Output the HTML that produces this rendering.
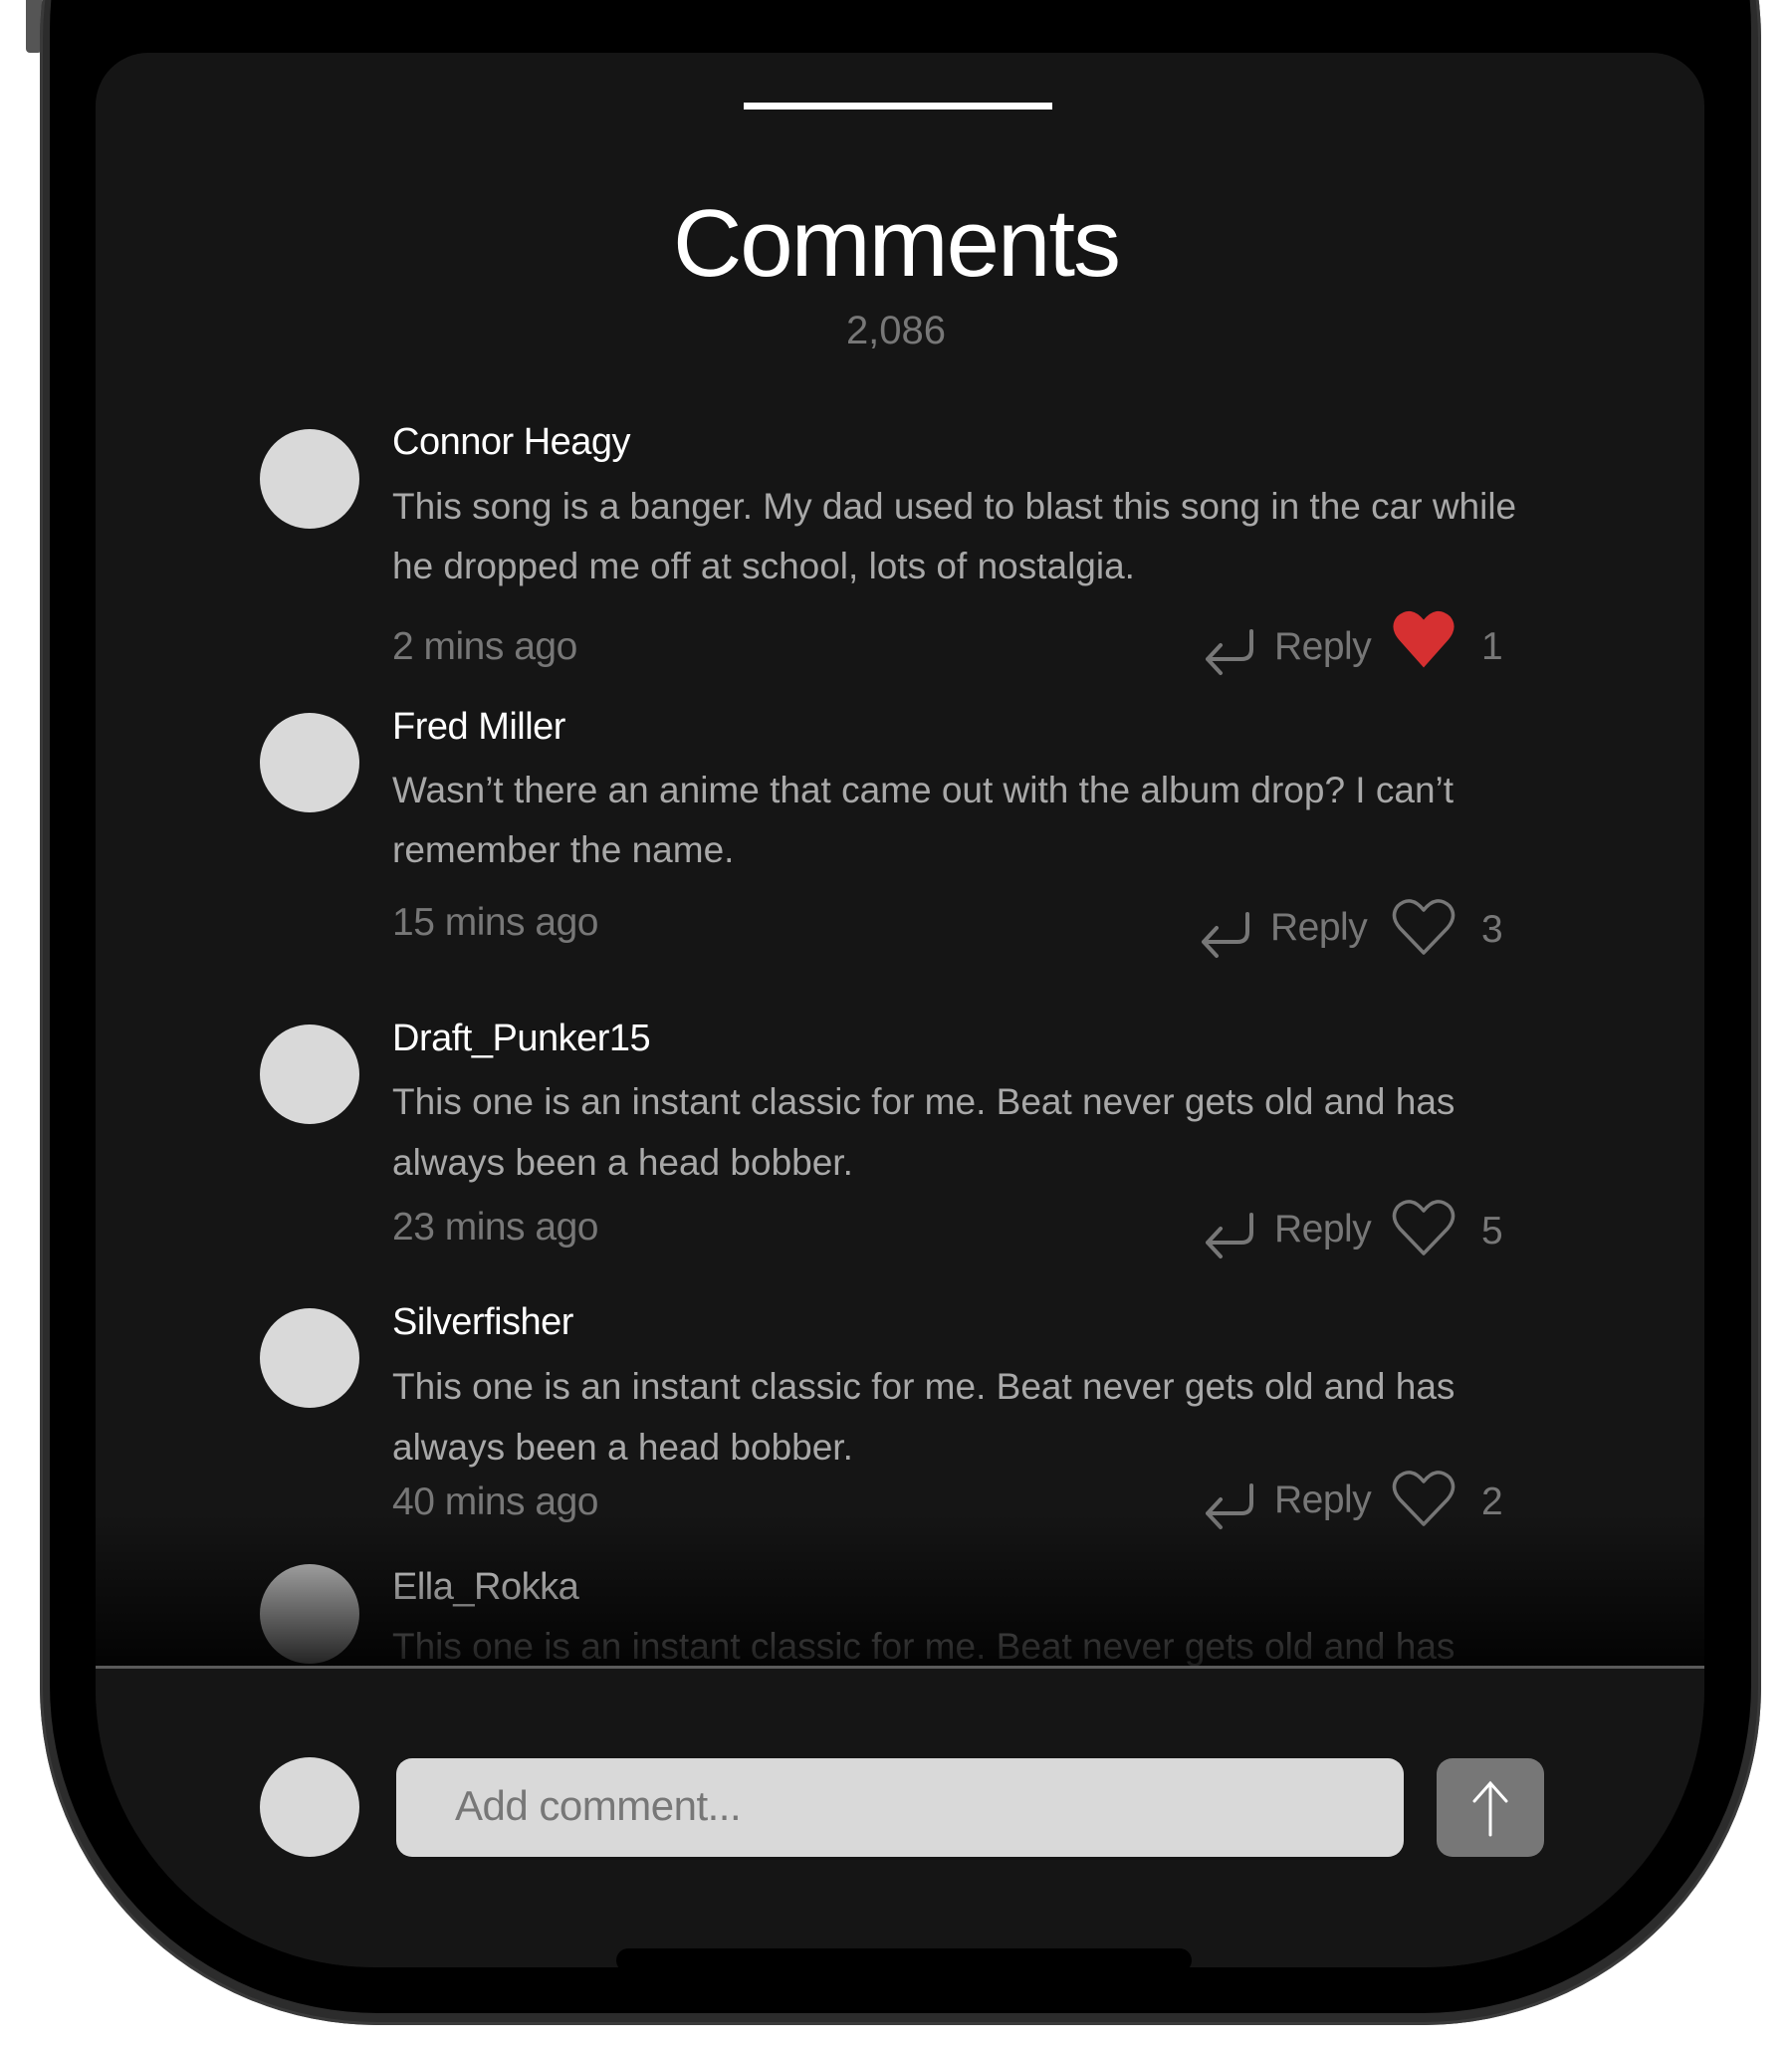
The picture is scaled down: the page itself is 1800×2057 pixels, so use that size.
<!DOCTYPE html>
<html><head><meta charset="utf-8"><style>
*{margin:0;padding:0;box-sizing:border-box}
body{width:1800px;height:2057px;background:#fff;position:relative;overflow:hidden;font-family:"Liberation Sans",sans-serif}
.a{position:absolute}
.frame{left:40px;top:-300px;width:1729px;height:2334px;border-radius:340px;background:#2c2c2c;box-shadow:inset 0 0 0 3px #3a3a3a}
.inner{left:50px;top:-300px;width:1709px;height:2322px;border-radius:330px;background:#000}
.sheet{left:96px;top:53px;width:1616px;height:1923px;border-radius:53px 53px 280px 280px;background:#151515;overflow:hidden}
.av{width:100px;height:100px;border-radius:50%;background:#d9d9d9;left:261px}
.name{left:394px;color:#fff;font-size:38px;letter-spacing:-0.5px;white-space:nowrap}
.body{left:394px;color:#a8a8a8;font-size:37px;letter-spacing:0px;white-space:nowrap}
.meta{color:#777;font-size:39px;letter-spacing:-0.5px;white-space:nowrap}
</style></head><body>
<div class="a" style="left:26px;top:0;width:16px;height:53px;background:#555;border-radius:0 0 4px 4px"></div>
<div class="a frame"></div>
<div class="a inner"></div>
<div class="a sheet"></div>
<div class="a" style="left:747px;top:103px;width:310px;height:7px;background:#fff"></div>
<div class="a" style="left:0;width:1800px;top:190px;text-align:center;color:#fff;font-size:96px;letter-spacing:-2px">Comments</div>
<div class="a" style="left:0;width:1800px;top:310px;text-align:center;color:#777;font-size:40px">2,086</div>

<div class="a av" style="top:431px"></div>
<div class="a name" style="top:423px">Connor Heagy</div>
<div class="a body" style="top:488px">This song is a banger. My dad used to blast this song in the car while</div>
<div class="a body" style="top:548px">he dropped me off at school, lots of nostalgia.</div>
<div class="a meta" style="left:394px;top:628px">2 mins ago</div>

<div class="a av" style="top:716px"></div>
<div class="a name" style="top:709px">Fred Miller</div>
<div class="a body" style="top:773px">Wasn’t there an anime that came out with the album drop? I can’t</div>
<div class="a body" style="top:833px">remember the name.</div>
<div class="a meta" style="left:394px;top:905px">15 mins ago</div>

<div class="a av" style="top:1029px"></div>
<div class="a name" style="top:1022px">Draft_Punker15</div>
<div class="a body" style="top:1086px">This one is an instant classic for me. Beat never gets old and has</div>
<div class="a body" style="top:1147px">always been a head bobber.</div>
<div class="a meta" style="left:394px;top:1211px">23 mins ago</div>

<div class="a av" style="top:1314px"></div>
<div class="a name" style="top:1307px">Silverfisher</div>
<div class="a body" style="top:1372px">This one is an instant classic for me. Beat never gets old and has</div>
<div class="a body" style="top:1433px">always been a head bobber.</div>
<div class="a meta" style="left:394px;top:1487px">40 mins ago</div>

<div class="a av" style="top:1571px"></div>
<div class="a name" style="top:1573px">Ella_Rokka</div>
<div class="a body" style="top:1633px">This one is an instant classic for me. Beat never gets old and has</div>

<svg class="a" style="left:0;top:0" width="1800" height="1700">
<g fill="none" stroke="#777" stroke-width="4" stroke-linecap="round" stroke-linejoin="round">
<g><path d="M1257 634v18q0 10-10 10h-34M1226 648l-13 14 13 14"/></g>
<g transform="translate(-4,284)"><path d="M1257 634v18q0 10-10 10h-34M1226 648l-13 14 13 14"/></g>
<g transform="translate(0,586)"><path d="M1257 634v18q0 10-10 10h-34M1226 648l-13 14 13 14"/></g>
<g transform="translate(0,858)"><path d="M1257 634v18q0 10-10 10h-34M1226 648l-13 14 13 14"/></g>
<g stroke-width="3.5">
<path transform="translate(0,290)" d="M1430 667L1406 642Q1396 630 1404 620Q1417 608 1430 624Q1443 608 1456 620Q1464 630 1454 642Z"/>
<path transform="translate(0,592)" d="M1430 667L1406 642Q1396 630 1404 620Q1417 608 1430 624Q1443 608 1456 620Q1464 630 1454 642Z"/>
<path transform="translate(0,864)" d="M1430 667L1406 642Q1396 630 1404 620Q1417 608 1430 624Q1443 608 1456 620Q1464 630 1454 642Z"/>
</g></g>
<path d="M1430 669L1406 642Q1396 630 1404 620Q1417 608 1430 624Q1443 608 1456 620Q1464 630 1454 642Z" fill="#d63031" stroke="#d63031" stroke-width="2"/>
</svg>
<div class="a meta" style="left:1280px;top:628px">Reply</div>
<div class="a meta" style="left:1488px;top:628px">1</div>
<div class="a meta" style="left:1276px;top:910px">Reply</div>
<div class="a meta" style="left:1488px;top:912px">3</div>
<div class="a meta" style="left:1280px;top:1213px">Reply</div>
<div class="a meta" style="left:1488px;top:1215px">5</div>
<div class="a meta" style="left:1280px;top:1485px">Reply</div>
<div class="a meta" style="left:1488px;top:1487px">2</div>

<div class="a" style="left:96px;top:1520px;width:1616px;height:155px;background:linear-gradient(rgba(0,0,0,0),rgba(0,0,0,0.85))"></div>
<div class="a" style="left:96px;top:1673px;width:1616px;height:3px;background:#5a5a5a"></div>
<div class="a" style="left:96px;top:1676px;width:1616px;height:300px;background:#151515;border-radius:0 0 280px 280px"></div>

<div class="a av" style="top:1765px"></div>
<div class="a" style="left:398px;top:1766px;width:1012px;height:99px;border-radius:16px;background:#d9d9d9"></div>
<div class="a" style="left:457px;top:1790px;color:#777;font-size:42px;letter-spacing:-0.5px">Add comment...</div>
<div class="a" style="left:1443px;top:1766px;width:108px;height:99px;border-radius:16px;background:#777"></div>
<svg class="a" style="left:1443px;top:1766px" width="108" height="99"><g fill="none" stroke="#fff" stroke-width="3" stroke-linecap="round"><path d="M54 77V25M38 43l16-18 16 18"/></g></svg>
<div class="a" style="left:619px;top:1957px;width:578px;height:24px;border-radius:12px;background:#000"></div>
</body></html>
